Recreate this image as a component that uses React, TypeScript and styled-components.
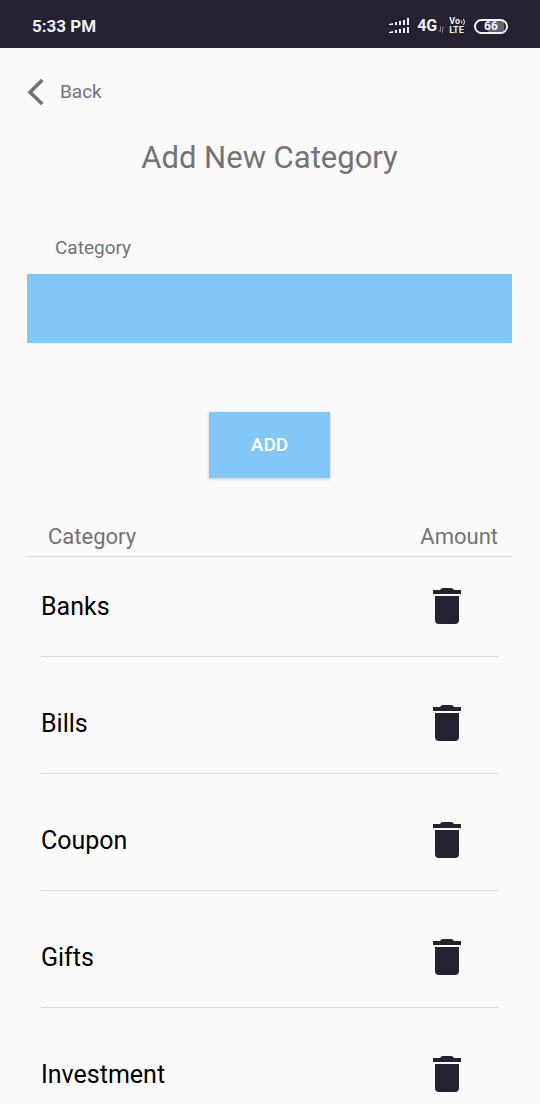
import React, { useState } from "react";
import styled, { createGlobalStyle } from "styled-components";

const GlobalStyle = createGlobalStyle`
  *, *::before, *::after { box-sizing: border-box; }
  body {
    margin: 0;
    background: #fafafa;
    font-family: Roboto, "Liberation Sans", sans-serif;
  }
`;

const Screen = styled.div`
  display: flex;
  flex-direction: column;
  height: 100vh;
  color: #737373;
`;

const StatusBar = styled.header`
  flex: none;
  display: flex;
  align-items: center;
  justify-content: space-between;
  height: 48px;
  padding: 4px 32px 0;
  background: #242131;
  color: #f1f0f5;
`;

const Clock = styled.time`
  font-size: 17px;
  font-weight: 700;
  line-height: 20px;
`;

const StatusIcons = styled.div`
  display: flex;
  align-items: center;
`;

const Network = styled.span`
  margin-left: 8px;
  font-size: 16px;
  font-weight: 700;
  line-height: 20px;
`;

const Volte = styled.span`
  display: flex;
  flex-direction: column;
  margin: 0 8px 0 4px;
  font-size: 9px;
  font-weight: 700;
  line-height: 9px;
`;

const VoLine = styled.span`
  display: flex;
  align-items: center;
`;

const Battery = styled.span`
  display: flex;
  align-items: center;
  justify-content: center;
  width: 34px;
  height: 15px;
  border: 2px solid #f1f0f5;
  border-radius: 8px;
  background: linear-gradient(to right, #242131 40%, #65636f 40%, #65636f 92%, #242131 92%);
  font-size: 12px;
  font-weight: 700;
  line-height: 12px;
`;

const Content = styled.main`
  flex: 1;
  min-height: 0;
  overflow-y: auto;
  scrollbar-width: none;
  padding: 28px 28px 0 27px;
`;

const BackButton = styled.button`
  display: flex;
  align-items: center;
  gap: 15px;
  height: 32px;
  padding: 0;
  border: 0;
  background: none;
  color: inherit;
  font: 400 19px/24px Roboto, "Liberation Sans", sans-serif;
  cursor: pointer;
`;

const Title = styled.h1`
  margin: 30px 0 0;
  font-size: 31px;
  font-weight: 400;
  line-height: 40px;
  text-align: center;
`;

const Form = styled.form`
  display: flex;
  flex-direction: column;
  margin-top: 56px;
`;

const FieldLabel = styled.label`
  padding: 0 28px;
  font-size: 19px;
  line-height: 28px;
`;

const FieldInput = styled.input`
  width: 100%;
  height: 69px;
  margin-top: 12px;
  padding: 0 28px;
  border: 0;
  border-radius: 0;
  background: #81c7f8;
  color: #000;
  font: 400 19px/28px Roboto, "Liberation Sans", sans-serif;
`;

const AddButton = styled.button`
  align-self: center;
  width: 121px;
  height: 66px;
  margin-top: 69px;
  padding: 0;
  border: 0;
  background: #81c7f8;
  box-shadow: 0 1px 3px rgba(0, 0, 0, 0.2);
  color: #fff;
  font: 500 19px/24px Roboto, "Liberation Sans", sans-serif;
  cursor: pointer;
`;

const Table = styled.table`
  width: 100%;
  margin-top: 40px;
  border-collapse: separate;
  border-spacing: 0;
`;

const HeadCell = styled.th<{ $align: "left" | "right" }>`
  height: 39px;
  padding: 0 ${({ $align }) => ($align === "left" ? "21px" : "14px")};
  border-bottom: 1px solid #d8d8d8;
  font-size: 22px;
  font-weight: 400;
  line-height: 28px;
  text-align: ${({ $align }) => $align};
`;

const Row = styled.tr`
  & + & > td { padding-top: 17px; }
`;

const NameCell = styled.td`
  padding: 0 0 0 14px;
`;

const ActionCell = styled.td`
  padding: 0 14px 0 0;
`;

const CellBody = styled.div<{ $end?: boolean }>`
  display: flex;
  align-items: center;
  justify-content: ${({ $end }) => ($end ? "flex-end" : "flex-start")};
  height: 100px;
  padding-right: ${({ $end }) => ($end ? "37px" : "0")};
  border-bottom: 1px solid #d8d8d8;
  color: #000;
  font-size: 25px;
  line-height: 32px;
`;

const DeleteButton = styled.button`
  display: flex;
  padding: 0 0 2px;
  border: 0;
  background: none;
  color: #242131;
  cursor: pointer;
`;

const SignalIcon = () => (
  <svg width="20" height="17" viewBox="0 0 20 17" fill="currentColor" aria-hidden="true">
    <path d="M0 6l4-1v2H0zM6 4h2v3H6zM10 3h2v4h-2zM14 2h2v5h-2zM18 0h2v7h-2zM0 14l4-1v2H0zM6 12h2v3H6zM10 11h2v4h-2zM14 10h2v5h-2zM18 9h2v6h-2z" />
  </svg>
);

const DataIcon = () => (
  <svg width="8" height="16" viewBox="0 0 8 16" fill="none" stroke="#7c7a86" aria-hidden="true">
    <path d="M3.500 8v6L1.500 12M5.500 15V9.500H7.500" />
  </svg>
);

const WaveIcon = () => (
  <svg width="6" height="8" viewBox="0 0 6 8" fill="none" stroke="currentColor" aria-hidden="true">
    <path d="M1.500 2.500q1 1.500 0 3M3.500 1q2 3 0 6" />
  </svg>
);

const BackIcon = () => (
  <svg width="18" height="28" viewBox="0 0 18 28" fill="none" stroke="currentColor" strokeWidth="3.600" aria-hidden="true">
    <path d="M15.300 2L3 14.200 15.300 26" />
  </svg>
);

const TrashIcon = () => (
  <svg width="28" height="36" viewBox="0 0 28 36" fill="currentColor" aria-hidden="true">
    <path d="M2 8h24v24a4 4 0 0 1-4 4H6a4 4 0 0 1-4-4zM0 2h7q1-2 3-2h8q2 0 3 2h7v4H0z" />
  </svg>
);

const initialCategories = ["Banks", "Bills", "Coupon", "Gifts", "Investment"];

export default function App() {
  const [categories, setCategories] = useState(initialCategories);
  const [name, setName] = useState("");

  const add = (event: React.FormEvent) => {
    event.preventDefault();
    const value = name.trim();
    if (value && !categories.includes(value)) setCategories([...categories, value]);
    setName("");
  };

  return (
    <>
      <GlobalStyle />
      <Screen>
        <StatusBar>
          <Clock dateTime="17:33">5:33 PM</Clock>
          <StatusIcons>
            <SignalIcon />
            <Network>4G</Network>
            <DataIcon />
            <Volte>
              <VoLine>Vo<WaveIcon /></VoLine>
              <span>LTE</span>
            </Volte>
            <Battery>66</Battery>
          </StatusIcons>
        </StatusBar>
        <Content>
          <BackButton type="button">
            <BackIcon />
            Back
          </BackButton>
          <Title>Add New Category</Title>
          <Form onSubmit={add}>
            <FieldLabel htmlFor="category">Category</FieldLabel>
            <FieldInput id="category" value={name} onChange={(e) => setName(e.target.value)} />
            <AddButton type="submit">ADD</AddButton>
          </Form>
          <Table>
            <thead>
              <tr>
                <HeadCell scope="col" $align="left">Category</HeadCell>
                <HeadCell scope="col" $align="right">Amount</HeadCell>
              </tr>
            </thead>
            <tbody>
              {categories.map((category) => (
                <Row key={category}>
                  <NameCell>
                    <CellBody>{category}</CellBody>
                  </NameCell>
                  <ActionCell>
                    <CellBody $end>
                      <DeleteButton
                        type="button"
                        aria-label={`Delete ${category}`}
                        onClick={() => setCategories(categories.filter((c) => c !== category))}
                      >
                        <TrashIcon />
                      </DeleteButton>
                    </CellBody>
                  </ActionCell>
                </Row>
              ))}
            </tbody>
          </Table>
        </Content>
      </Screen>
    </>
  );
}
